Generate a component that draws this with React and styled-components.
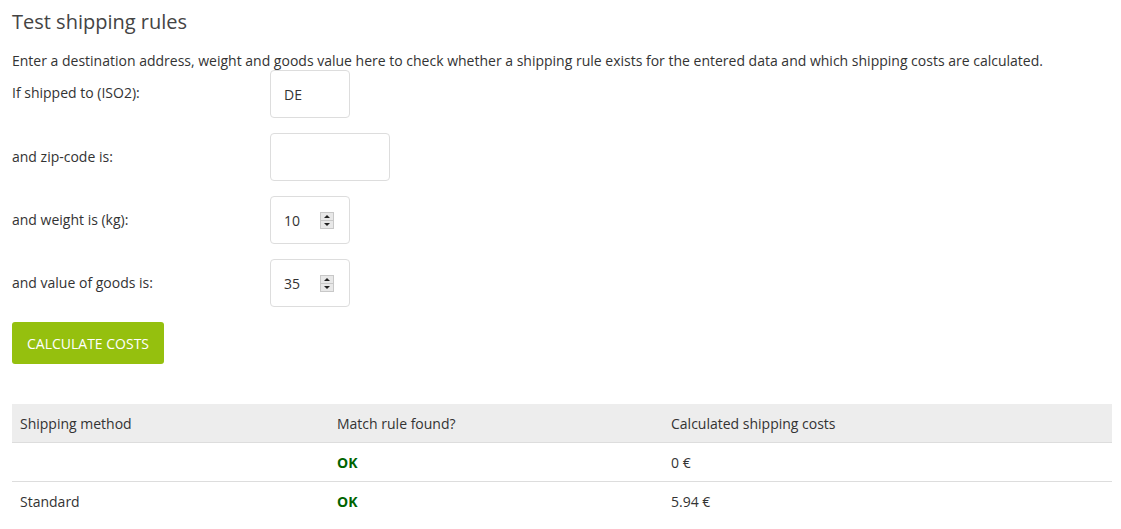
import styled, { createGlobalStyle } from 'styled-components'

const Global = createGlobalStyle`
  body {
    margin: 0;
    background: #fff;
    font-family: "Open Sans", "Liberation Sans", sans-serif;
    font-size: 14px;
    color: #333;
  }
`

const Page = styled.div`
  padding: 8px 10px 0 12px;
`

const Title = styled.h2`
  margin: 0;
  font-size: 20px;
  font-weight: 400;
  line-height: 28px;
  color: #444;
`

const Intro = styled.p`
  margin: 15px 0 0;
  line-height: 19px;
`

const Form = styled.div`
  display: flex;
  flex-direction: column;
  gap: 15px;
`

const FieldRow = styled.div`
  display: grid;
  grid-template-columns: 258px auto;
  align-items: center;
`

const Label = styled.label`
  line-height: 20px;
  align-self: start;
  padding-top: ${({ $top }) => $top || '14px'};
`

const Box = styled.div`
  box-sizing: border-box;
  width: ${({ $w }) => $w || '80px'};
  height: 48px;
  border: 1px solid #ddd;
  border-radius: 4px;
  display: flex;
  align-items: center;
  padding: 0 15px 0 13px;
  font-size: 14px;
  color: #333;
`

const Value = styled.span`
  flex: 1;
`

const Spinner = styled.span`
  display: flex;
  flex-direction: column;
  width: 12px;
  height: 15px;
  border: 1px solid #c8c8c8;
  background: #e8e8e8;
  margin-left: 3px;
`

const SpinHalf = styled.span`
  flex: 1;
  display: flex;
  align-items: center;
  justify-content: center;
  & + & { border-top: 1px solid #c8c8c8; }
`

const Arrow = styled.span`
  width: 0;
  height: 0;
  border-left: 3px solid transparent;
  border-right: 3px solid transparent;
  ${({ $down }) => ($down ? 'border-top: 3px solid #222;' : 'border-bottom: 3px solid #222;')}
`

const Button = styled.button`
  margin-top: 15px;
  width: 152px;
  height: 42px;
  border: none;
  border-radius: 3px;
  background: #95c00e;
  color: #fff;
  font-family: inherit;
  font-size: 14px;
  text-transform: uppercase;
  padding: 0;
  cursor: pointer;
`

const Table = styled.table`
  margin-top: 40px;
  width: 1100px;
  border-collapse: collapse;
`

const Th = styled.th`
  background: #ededed;
  text-align: left;
  font-weight: 400;
  height: 38px;
  padding: 0 8px;
  border-bottom: 1px solid #ddd;
  width: ${({ $w }) => $w || 'auto'};
`

const Td = styled.td`
  height: 38px;
  padding: 0 8px;
  border-bottom: ${({ $last }) => ($last ? 'none' : '1px solid #ddd')};
`

const Ok = styled.span`
  font-weight: 700;
  color: #006400;
`

function NumberBox({ value }) {
  return (
    <Box>
      <Value>{value}</Value>
      <Spinner>
        <SpinHalf><Arrow /></SpinHalf>
        <SpinHalf><Arrow $down /></SpinHalf>
      </Spinner>
    </Box>
  )
}

const rows = [
  { method: '', cost: '0 €' },
  { method: 'Standard', cost: '5.94 €' },
]

export default function App() {
  return (
    <Page>
      <Global />
      <Title>Test shipping rules</Title>
      <Intro>
        Enter a destination address, weight and goods value here to check whether a shipping rule exists for the entered data and which shipping costs are calculated.
      </Intro>
      <Form>
        <FieldRow>
          <Label $top="13px">If shipped to (ISO2):</Label>
          <Box>DE</Box>
        </FieldRow>
        <FieldRow>
          <Label>and zip-code is:</Label>
          <Box $w="120px" />
        </FieldRow>
        <FieldRow>
          <Label>and weight is (kg):</Label>
          <NumberBox value="10" />
        </FieldRow>
        <FieldRow>
          <Label>and value of goods is:</Label>
          <NumberBox value="35" />
        </FieldRow>
      </Form>
      <Button>Calculate costs</Button>
      <Table>
        <thead>
          <tr>
            <Th $w="301px">Shipping method</Th>
            <Th $w="318px">Match rule found?</Th>
            <Th>Calculated shipping costs</Th>
          </tr>
        </thead>
        <tbody>
          {rows.map((r, i) => (
            <tr key={i}>
              <Td $last={i === rows.length - 1}>{r.method}</Td>
              <Td $last={i === rows.length - 1}><Ok>OK</Ok></Td>
              <Td $last={i === rows.length - 1}>{r.cost}</Td>
            </tr>
          ))}
        </tbody>
      </Table>
    </Page>
  )
}
